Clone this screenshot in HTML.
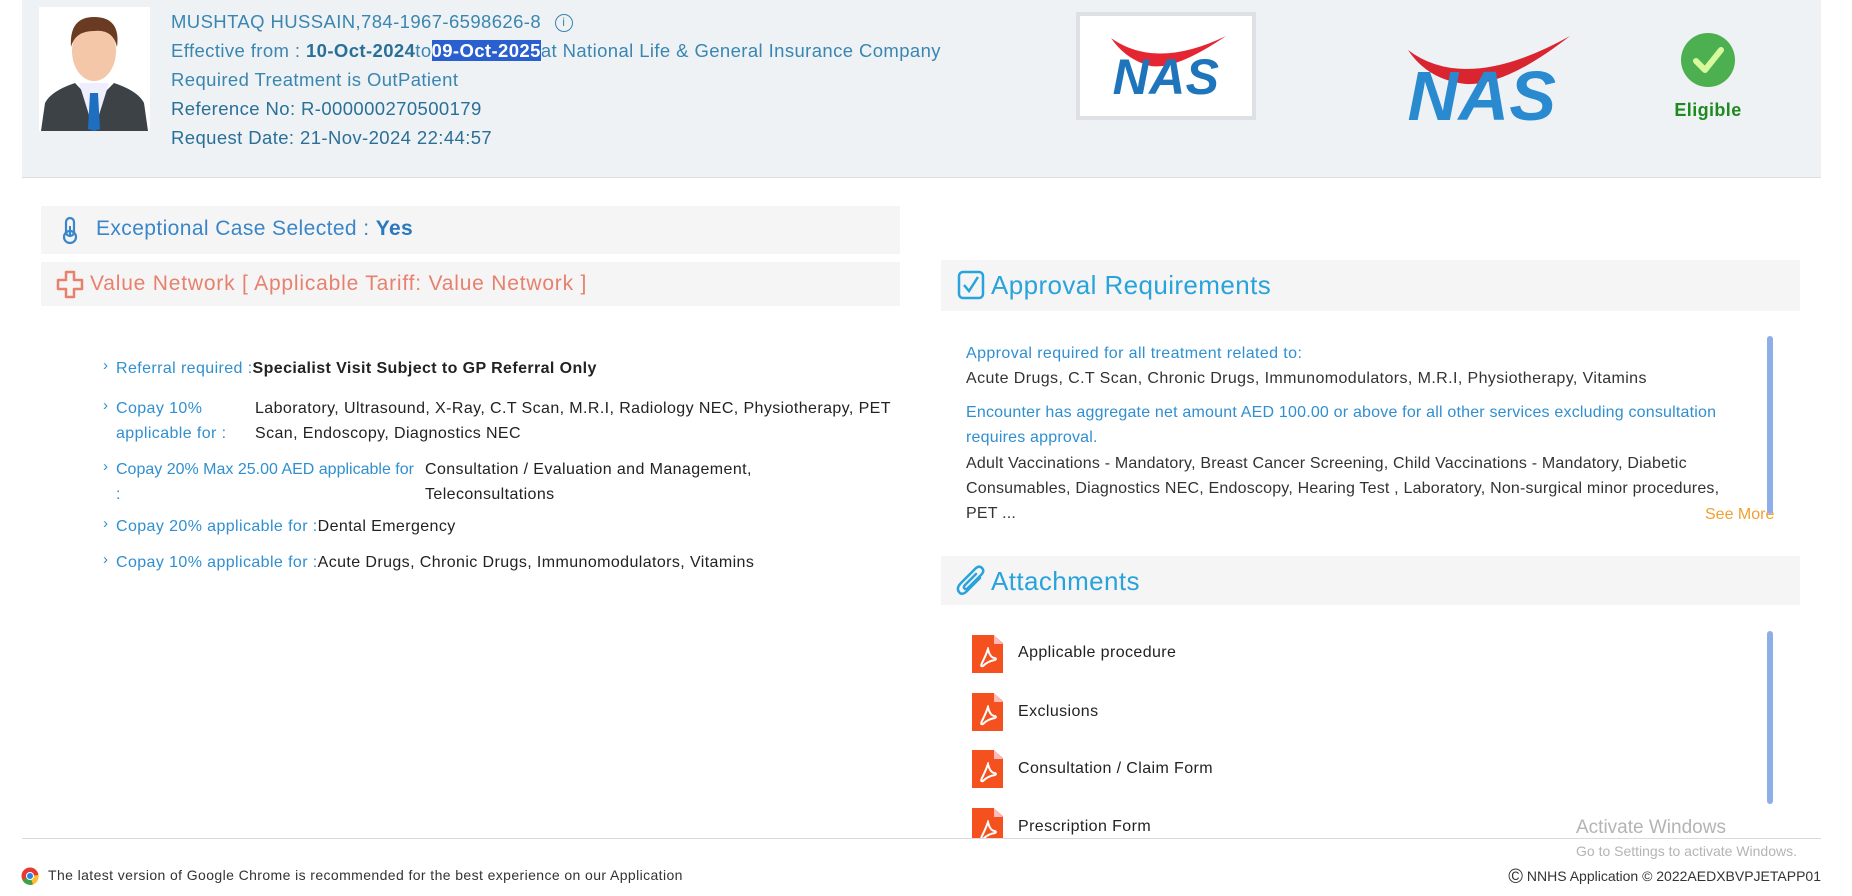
<!DOCTYPE html>
<html><head><meta charset="utf-8">
<style>
*{margin:0;padding:0;box-sizing:border-box}
body{width:1852px;height:896px;background:#fff;font-family:"Liberation Sans",sans-serif;position:relative;overflow:hidden;letter-spacing:0.4px}
.abs{position:absolute;white-space:nowrap}
.hdr{position:absolute;left:22px;top:0;width:1799px;height:178px;background:#eef2f5;border-bottom:1px solid #dcdfe2}
.ht{position:absolute;left:171px;font-size:18.5px;color:#3a86b0}
.ht b{color:#2a6f98}
.box{position:absolute;background:#f5f5f5}
.li{position:absolute;font-size:16px;color:#222}
.li .l{color:#2f8fd0}
.ch{color:#2f8fd0;font-size:15px;position:absolute;left:-13px;top:-3px}
.ar{position:absolute;left:966px;font-size:16px;white-space:nowrap}
.pdf{position:absolute;width:31px;height:38px;background:#f4511e;clip-path:polygon(0 0,70% 0,100% 22%,100% 100%,0 100%)}
.pdf:after{content:"";position:absolute;right:0;top:0;width:9px;height:9px;background:#fbb;clip-path:polygon(0 0,100% 100%,0 100%)}
.pdf svg{position:absolute;left:6px;top:12px}
.pt{position:absolute;font-size:16px;color:#222;white-space:nowrap}
</style></head><body>
<div class="hdr"></div>
<svg class="abs" style="left:39px;top:7px" width="111" height="124" viewBox="0 0 111 124">
<rect width="111" height="124" fill="#fff"/>
<path d="M2 124 L6 96 Q12 84 36 76 L55 96 L75 76 Q99 84 105 96 L109 124Z" fill="#3d4247"/>
<path d="M40 76 L55 124 L70 76 Z" fill="#eef"/>
<path d="M51 86 L59 86 L61 122 L55 124 L49 122Z" fill="#1f6fc0"/>
<ellipse cx="55" cy="44" rx="22" ry="30" fill="#f3c7a8"/>
<path d="M32 40 Q30 10 55 10 Q82 10 78 40 Q74 22 55 24 Q36 24 32 40Z" fill="#6a3b22"/>
</svg>
<div class="ht abs" style="top:11px">MUSHTAQ HUSSAIN,784-1967-6598626-8 <span style="display:inline-block;width:18px;height:18px;border:1.5px solid #3a86b0;border-radius:50%;font-size:12px;text-align:center;line-height:15px;margin-left:8px;vertical-align:2px;letter-spacing:0">i</span></div>
<div class="ht abs" style="top:40px">Effective from : <b>10-Oct-2024</b>to<b style="background:#2a5fd0;color:#fff">09-Oct-2025</b>at National Life &amp; General Insurance Company</div>
<div class="ht abs" style="top:69px">Required Treatment is OutPatient</div>
<div class="ht abs" style="top:98px;color:#2a6f98">Reference No: R-000000270500179</div>
<div class="ht abs" style="top:127px;color:#2a6f98">Request Date: 21-Nov-2024 22:44:57</div>

<div class="abs" style="left:1076px;top:12px;width:180px;height:108px;background:#fff;border:4px solid #dde1e5"></div>
<svg class="abs" style="left:1096px;top:30px" width="140" height="70" viewBox="0 0 140 70">
<path d="M15 8 Q60 40 130 6 Q80 40 55 36 Q30 30 15 8Z" fill="#e52531"/>
<text x="70" y="64" text-anchor="middle" font-family="Liberation Sans" font-weight="bold" font-style="italic" font-size="50" fill="#1f75bb">NAS</text>
</svg>
<svg class="abs" style="left:1396px;top:34px" width="176" height="90" viewBox="0 0 176 90">
<path d="M12 16 Q70 60 174 2 Q110 52 70 50 Q32 46 12 16Z" fill="#d92530"/>
<text x="86" y="86" text-anchor="middle" font-family="Liberation Sans" font-weight="bold" font-style="italic" font-size="70" fill="#2a8ad0">NAS</text>
</svg>
<svg class="abs" style="left:1680px;top:32px" width="56" height="56" viewBox="0 0 56 56">
<circle cx="28" cy="28" r="27" fill="#4caf50"/>
<path d="M16 29 L25 38 L41 18" stroke="#d9f99d" stroke-width="6" fill="none" stroke-linecap="round" stroke-linejoin="round"/>
</svg>
<div class="abs" style="left:1658px;width:100px;text-align:center;top:100px;font-size:18px;color:#1f8a1f;font-weight:bold">Eligible</div>

<div class="box" style="left:41px;top:206px;width:859px;height:48px"></div>
<svg class="abs" style="left:62px;top:216px" width="16" height="28" viewBox="0 0 16 28"><rect x="4" y="2" width="8" height="18" rx="4" fill="none" stroke="#3a86c8" stroke-width="2.2"/><circle cx="8" cy="21" r="6" fill="none" stroke="#3a86c8" stroke-width="2.2"/><line x1="8" y1="10" x2="8" y2="21" stroke="#3a86c8" stroke-width="2"/></svg>
<div class="abs" style="left:96px;top:217px;font-size:21px;color:#3a86c8">Exceptional Case Selected : <b style="color:#2a78c0">Yes</b></div>
<div class="box" style="left:41px;top:262px;width:859px;height:44px"></div>
<svg class="abs" style="left:56px;top:270px" width="28" height="30" viewBox="0 0 28 30"><path d="M10 2 H18 V10 H26 V19 H18 V27 H10 V19 H2 V10 H10Z" fill="none" stroke="#e8806e" stroke-width="2.5" stroke-linejoin="round"/></svg>
<div class="abs" style="left:90px;top:272px;font-size:21px;color:#e8806e;letter-spacing:0.8px">Value Network [ Applicable Tariff: Value Network ]</div>

<div class="li abs" style="left:116px;top:360px"><span class="ch">›</span><span class="l">Referral required :</span><b>Specialist Visit Subject to GP Referral Only</b></div>
<div class="li abs" style="left:116px;top:396px;line-height:25px"><span class="ch">›</span><span class="l">Copay 10%<br>applicable for :</span></div>
<div class="li abs" style="left:255px;top:396px;line-height:25px">Laboratory, Ultrasound, X-Ray, C.T Scan, M.R.I, Radiology NEC, Physiotherapy, PET<br>Scan, Endoscopy, Diagnostics NEC</div>
<div class="li abs" style="left:116px;top:457px;line-height:25px;letter-spacing:0"><span class="ch">›</span><span class="l">Copay 20% Max 25.00 AED applicable for<br>:</span></div>
<div class="li abs" style="left:425px;top:457px;line-height:25px">Consultation / Evaluation and Management,<br>Teleconsultations</div>
<div class="li abs" style="left:116px;top:518px"><span class="ch">›</span><span class="l">Copay 20% applicable for :</span>Dental Emergency</div>
<div class="li abs" style="left:116px;top:554px"><span class="ch">›</span><span class="l">Copay 10% applicable for :</span>Acute Drugs, Chronic Drugs, Immunomodulators, Vitamins</div>

<div class="box" style="left:941px;top:260px;width:859px;height:51px"></div>
<svg class="abs" style="left:957px;top:269px" width="28" height="32" viewBox="0 0 28 32"><rect x="2" y="3" width="24" height="26" rx="4" fill="none" stroke="#29a3dc" stroke-width="2.5"/><path d="M7 16 L12 22 L21 8" stroke="#29a3dc" stroke-width="2.5" fill="none"/></svg>
<div class="abs" style="left:991px;top:270px;font-size:26px;color:#29a3dc">Approval Requirements</div>
<div class="ar" style="top:345px;color:#2f8fd0">Approval required for all treatment related to:</div>
<div class="ar" style="top:370px;color:#333">Acute Drugs, C.T Scan, Chronic Drugs, Immunomodulators, M.R.I, Physiotherapy, Vitamins</div>
<div class="ar" style="top:400px;color:#2f8fd0;line-height:25px;letter-spacing:0.2px">Encounter has aggregate net amount AED 100.00 or above for all other services excluding consultation<br>requires approval.</div>
<div class="ar" style="top:451px;color:#333;line-height:25px;letter-spacing:0.2px">Adult Vaccinations - Mandatory, Breast Cancer Screening, Child Vaccinations - Mandatory, Diabetic<br>Consumables, Diagnostics NEC, Endoscopy, Hearing Test , Laboratory, Non-surgical minor procedures,<br>PET ...</div>
<div class="abs" style="left:1705px;top:506px;font-size:16px;color:#f0a030;letter-spacing:0">See More</div>
<div class="abs" style="left:1767px;top:336px;width:6px;height:178px;border-radius:3px;background:#8eaee8"></div>

<div class="box" style="left:941px;top:556px;width:859px;height:49px"></div>
<svg class="abs" style="left:956px;top:564px" width="30" height="36" viewBox="0 0 30 36"><path d="M24 14 L11 27 Q6 32 3 28 Q0 24 5 19 L19 5 Q23 1 26 4 Q29 7 25 11 L12 24 Q10 26 8.5 24.5 Q7 23 9 21 L20 10" fill="none" stroke="#29a3dc" stroke-width="2.5" stroke-linecap="round"/></svg>
<div class="abs" style="left:991px;top:566px;font-size:26px;color:#29a3dc">Attachments</div>
<div style="position:absolute;left:941px;top:620px;width:900px;height:218px;overflow:hidden">
<div class="pdf" style="left:31px;top:15px"><svg width="20" height="22" viewBox="0 0 20 22"><path d="M10 2 Q8 8 4 16 Q2 20 5 19 Q10 14 17 13 Q19 12 17 11 Q12 11 10 2Z" fill="none" stroke="#fff" stroke-width="2"/></svg></div><div class="pt" style="left:77px;top:24px">Applicable procedure</div>
<div class="pdf" style="left:31px;top:73px"><svg width="20" height="22" viewBox="0 0 20 22"><path d="M10 2 Q8 8 4 16 Q2 20 5 19 Q10 14 17 13 Q19 12 17 11 Q12 11 10 2Z" fill="none" stroke="#fff" stroke-width="2"/></svg></div><div class="pt" style="left:77px;top:83px">Exclusions</div>
<div class="pdf" style="left:31px;top:130px"><svg width="20" height="22" viewBox="0 0 20 22"><path d="M10 2 Q8 8 4 16 Q2 20 5 19 Q10 14 17 13 Q19 12 17 11 Q12 11 10 2Z" fill="none" stroke="#fff" stroke-width="2"/></svg></div><div class="pt" style="left:77px;top:140px">Consultation / Claim Form</div>
<div class="pdf" style="left:31px;top:188px"><svg width="20" height="22" viewBox="0 0 20 22"><path d="M10 2 Q8 8 4 16 Q2 20 5 19 Q10 14 17 13 Q19 12 17 11 Q12 11 10 2Z" fill="none" stroke="#fff" stroke-width="2"/></svg></div><div class="pt" style="left:77px;top:198px">Prescription Form</div>
</div>
<div class="abs" style="left:1767px;top:631px;width:6px;height:173px;border-radius:3px;background:#8eaee8"></div>

<div class="abs" style="left:22px;top:838px;width:1799px;height:1px;background:#dadada"></div>
<div class="abs" style="left:1576px;top:817px;font-size:19px;color:#b4b4b4;letter-spacing:0">Activate Windows</div>
<div class="abs" style="left:1576px;top:843px;font-size:14px;color:#b4b4b4;letter-spacing:0">Go to Settings to activate Windows.</div>
<svg class="abs" style="left:21px;top:867px" width="18" height="18" viewBox="0 0 18 18"><circle cx="9" cy="9" r="8.5" fill="#e53935"/><path d="M9 9 L1.5 13 A8.5 8.5 0 0 0 12 17.5Z" fill="#43a047"/><path d="M9 9 L12 17.5 A8.5 8.5 0 0 0 17.5 8 Z" fill="#fbc02d"/><circle cx="9" cy="9" r="4" fill="#fff"/><circle cx="9" cy="9" r="3" fill="#1e88e5"/></svg>
<div class="abs" style="left:48px;top:867px;font-size:14px;color:#333">The latest version of Google Chrome is recommended for the best experience on our Application</div>
<div class="abs" style="right:31px;top:866px;font-size:14px;color:#333;letter-spacing:0"><span style="font-size:20px;vertical-align:-2px">©</span> NNHS Application © 2022AEDXBVPJETAPP01</div>
</body></html>
